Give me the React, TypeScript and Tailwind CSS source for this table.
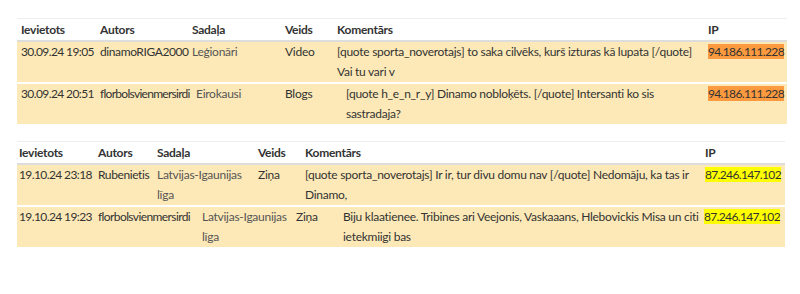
type Row = {
  cols: string;
  date: string;
  author: string;
  authorFit: string;
  section: string;
  kind: string;
  comment: string;
  ip: string;
};

type Table = {
  width: string;
  first: string;
  headCols: string;
  ipColor: string;
  rows: Row[];
};

const tables: Table[] = [
  {
    width: "w-[770px]",
    first: "pl-[4px]",
    headCols: "grid-cols-[83px_92px_93px_52px_371px_1fr]",
    ipColor: "bg-[#fb9a3f]",
    rows: [
      {
        cols: "grid-cols-[83px_92px_93px_52px_371px_1fr]",
        date: "30.09.24 19:05",
        author: "dinamoRIGA2000",
        authorFit: "tracking-[-0.4px]",
        section: "Leģionāri",
        kind: "Video",
        comment:
          "[quote sporta_noverotajs] to saka cilvēks, kurš izturas kā lupata [/quote] Vai tu vari v",
        ip: "94.186.111.228",
      },
      {
        cols: "grid-cols-[83px_96px_89px_61px_362px_1fr]",
        date: "30.09.24 20:51",
        author: "florbolsvienmersirdi",
        authorFit: "tracking-[-0.72px]",
        section: "Eirokausi",
        kind: "Blogs",
        comment: "[quote h_e_n_r_y] Dinamo nobloķēts. [/quote] Intersanti ko sis sastradaja?",
        ip: "94.186.111.228",
      },
    ],
  },
  {
    width: "w-[768px]",
    first: "pl-[2px]",
    headCols: "grid-cols-[81px_59px_101px_47px_400px_1fr]",
    ipColor: "bg-[#ffff00]",
    rows: [
      {
        cols: "grid-cols-[81px_59px_101px_47px_400px_1fr]",
        date: "19.10.24 23:18",
        author: "Rubenietis",
        authorFit: "tracking-[-0.4px]",
        section: "Latvijas-Igaunijas līga",
        kind: "Ziņa",
        comment:
          "[quote sporta_noverotajs] Ir ir, tur divu domu nav [/quote] Nedomāju, ka tas ir Dinamo,",
        ip: "87.246.147.102",
      },
      {
        cols: "grid-cols-[81px_104px_94px_47px_361px_1fr]",
        date: "19.10.24 19:23",
        author: "florbolsvienmersirdi",
        authorFit: "tracking-[-0.6px]",
        section: "Latvijas-Igaunijas līga",
        kind: "Ziņa",
        comment:
          "Biju klaatienee. Tribines ari Veejonis, Vaskaaans, Hlebovickis Misa un citi ietekmiigi bas",
        ip: "87.246.147.102",
      },
    ],
  },
];

function CommentTable({ table }: { table: Table }) {
  return (
    <div className={`${table.width} text-[12px] tracking-[-0.27px] text-[#333]`}>
      <div
        className={`grid ${table.headCols} border-t border-[#eeeeee] border-b-2 border-b-[#dddddd] font-bold leading-[21px]`}
      >
        <div className={table.first}>Ievietots</div>
        <div>Autors</div>
        <div>Sadaļa</div>
        <div>Veids</div>
        <div>Komentārs</div>
        <div>IP</div>
      </div>
      {table.rows.map((row, i) => (
        <div
          key={i}
          className={`grid ${row.cols} bg-[#fde9b7] leading-[20px] ${
            i < table.rows.length - 1 ? "border-b-2 border-white" : ""
          }`}
        >
          <div className={`${table.first} whitespace-nowrap tracking-[-0.6px]`}>{row.date}</div>
          <div className={`whitespace-nowrap ${row.authorFit}`}>{row.author}</div>
          <div className="pr-1 text-[#555]">{row.section}</div>
          <div>{row.kind}</div>
          <div className="pr-1">{row.comment}</div>
          <div className="whitespace-nowrap tracking-[-0.65px]">
            <span className={table.ipColor}>{row.ip}</span>
          </div>
        </div>
      ))}
    </div>
  );
}

export default function App() {
  return (
    <div
      className="min-h-[294px] bg-white pt-[18px] pl-[17px]"
      style={{ fontFamily: "Lato, 'Open Sans', sans-serif" }}
    >
      <div className="flex flex-col gap-[17px]">
        {tables.map((t, i) => (
          <CommentTable key={i} table={t} />
        ))}
      </div>
    </div>
  );
}
